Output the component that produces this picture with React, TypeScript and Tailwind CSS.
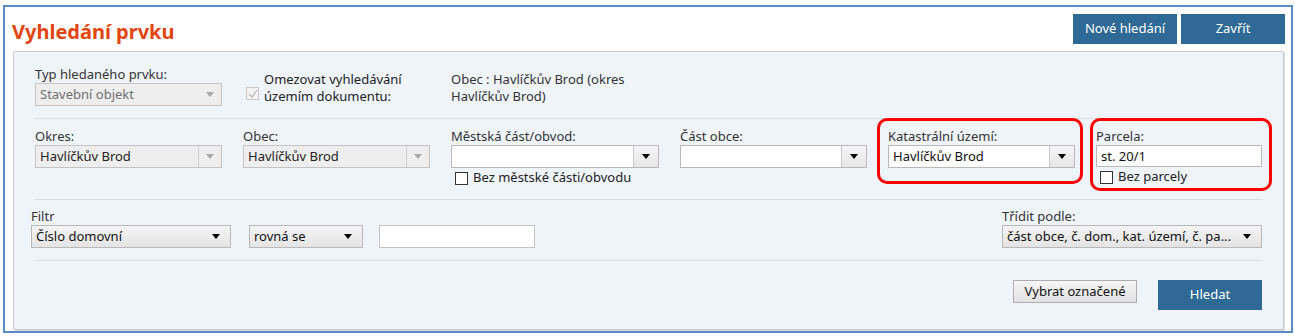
import type { ReactNode } from 'react';

function Arrow({ color = '#000' }: { color?: string }) {
  return (
    <svg width="8" height="5" viewBox="0 0 8 5">
      <polygon points="0,0 8,0 4,5" fill={color} />
    </svg>
  );
}

function DisabledSelect({ value, muted, divider, width }: { value: string; muted?: boolean; divider?: boolean; width: string }) {
  return (
    <div className={`${width} h-[23px] flex border border-[#c4c4c4] bg-[#eeeeee]`}>
      <div className={`flex-1 pl-[4px] leading-[21px] truncate ${muted ? 'text-[#707070]' : 'text-[#222]'}`}>{value}</div>
      <div className={`w-[23px] flex items-center justify-center ${divider ? 'border-l border-[#d0d0d0]' : ''}`}>
        <Arrow color="#a8a8a8" />
      </div>
    </div>
  );
}

function ComboSelect({ value, width }: { value?: string; width: string }) {
  return (
    <div className={`${width} h-[23px] flex border border-[#b9b9b9] bg-white`}>
      <div className="flex-1 pl-[4px] leading-[21px] text-[#111] truncate">{value}</div>
      <div className="w-[25px] flex items-center justify-center border-l border-[#c8c8c8] bg-gradient-to-b from-[#f6f6f6] to-[#e6e6e6]">
        <Arrow />
      </div>
    </div>
  );
}

function PlainSelect({ value, width }: { value: string; width: string }) {
  return (
    <div className={`${width} h-[23px] flex items-center border border-[#b9b9b9] bg-gradient-to-b from-[#f4f4f4] to-[#e4e4e4] pl-[4px] pr-[10px]`}>
      <div className="flex-1 leading-[21px] text-[#111] truncate">{value}</div>
      <Arrow />
    </div>
  );
}

function Checkbox({ label }: { label: string }) {
  return (
    <div className="flex items-center h-[18px] mt-[1px] pl-[4px]">
      <span className="w-[13px] h-[13px] border border-[#333] bg-white" />
      <span className="ml-[5px] text-[#222]">{label}</span>
    </div>
  );
}

function Field({ label, children, className = '' }: { label: string; children: ReactNode; className?: string }) {
  return (
    <div className={`shrink-0 ${className}`}>
      <div className="leading-[17px] text-[#333]">{label}</div>
      {children}
    </div>
  );
}

function Separator() {
  return <div className="h-px bg-[#d7dde6]" />;
}

export default function App() {
  return (
    <div className="font-['Noto_Sans',sans-serif] text-[13px] bg-white w-[1295px] h-[336px] pt-[5px] pl-[3px]">
      <div className="w-[1290px] h-[328px] border-2 border-[#5b8ac8] bg-white flex flex-col">
        <div className="flex items-start pt-[7px] pl-[7px] pr-[6px]">
          <h1 className="mt-[4px] text-[20px] leading-[28px] font-bold text-[#e2450f]">Vyhledání prvku</h1>
          <div className="ml-auto flex gap-[4px]">
            <button className="w-[104px] h-[30px] bg-[#2e6a95] text-white">Nové hledání</button>
            <button className="w-[104px] h-[30px] bg-[#2e6a95] text-white">Zavřít</button>
          </div>
        </div>

        <div className="ml-[8px] mt-[5px] w-[1271px] h-[279px] border border-[#c6c9cd] rounded-[2px] shadow-[1px_1px_1px_rgba(0,0,0,0.15)] bg-[#eff4fb] px-[21px] pt-[14px]">
          {/* typ prvku */}
          <div className="h-[52px] flex items-start">
            <Field label="Typ hledaného prvku:" className="w-[187px]">
              <DisabledSelect value="Stavební objekt" muted width="w-[187px]" />
            </Field>
            <div className="ml-[24px] mt-[21px] w-[13px] h-[13px] border border-[#c8c8c8] bg-[#f4f4f4] flex items-center justify-center">
              <svg width="10" height="9" viewBox="0 0 10 9">
                <polyline points="1,5 4,8 9,1" fill="none" stroke="#b8b8b8" strokeWidth="1.2" />
              </svg>
            </div>
            <div className="ml-[5px] mt-[5px] w-[170px] leading-[17px] text-[#222]">Omezovat vyhledávání územím dokumentu:</div>
            <div className="ml-[17px] mt-[5px] w-[190px] leading-[17px] text-[#333]">Obec : Havlíčkův Brod (okres Havlíčkův Brod)</div>
          </div>
          <Separator />

          {/* lokalita */}
          <div className="h-[80px] flex items-start">
            <Field label="Okres:" className="mt-[9px]">
              <DisabledSelect value="Havlíčkův Brod" divider width="w-[187px]" />
            </Field>
            <Field label="Obec:" className="mt-[9px] ml-[21px]">
              <DisabledSelect value="Havlíčkův Brod" divider width="w-[187px]" />
            </Field>
            <Field label="Městská část/obvod:" className="mt-[9px] ml-[21px]">
              <ComboSelect width="w-[208px]" />
              <Checkbox label="Bez městské části/obvodu" />
            </Field>
            <Field label="Část obce:" className="mt-[9px] ml-[21px]">
              <ComboSelect width="w-[187px]" />
            </Field>
            <div className="shrink-0 ml-[10px] -mt-[1px] w-[206px] h-[66px] border-[3px] border-[#ff0000] rounded-[10px] pl-[8px] pt-[7px]">
              <Field label="Katastrální území:">
                <ComboSelect value="Havlíčkův Brod" width="w-[187px]" />
              </Field>
            </div>
            <div className="shrink-0 ml-[7px] -mt-[1px] w-[182px] h-[73px] border-[3px] border-[#ff0000] rounded-[10px] pl-[3px] pt-[7px]">
              <Field label="Parcela:">
                <div className="w-[166px] h-[22px] border border-[#b9b9b9] bg-white pl-[4px] leading-[20px] text-[#111]">st. 20/1</div>
                <Checkbox label="Bez parcely" />
              </Field>
            </div>
          </div>
          <Separator />

          {/* filtr */}
          <div className="h-[60px] flex items-start pt-[8px]">
            <Field label="Filtr" className="-ml-[4px]">
              <div className="flex">
                <PlainSelect value="Číslo domovní" width="w-[200px]" />
                <div className="ml-[18px]">
                  <PlainSelect value="rovná se" width="w-[114px]" />
                </div>
                <div className="ml-[16px] w-[156px] h-[23px] border border-[#c4c4c4] bg-white" />
              </div>
            </Field>
            <Field label="Třídit podle:" className="ml-auto">
              <PlainSelect value="část obce, č. dom., kat. území, č. pa..." width="w-[260px]" />
            </Field>
          </div>
          <Separator />

          <div className="flex justify-end items-start pt-[19px]">
            <button className="w-[124px] h-[23px] border border-[#adadad] bg-gradient-to-b from-[#f5f5f5] to-[#e2e2e2] text-[#111] leading-[21px]">Vybrat označené</button>
            <button className="ml-[21px] w-[104px] h-[30px] bg-[#2e6a95] text-white">Hledat</button>
          </div>
        </div>
      </div>
    </div>
  );
}
